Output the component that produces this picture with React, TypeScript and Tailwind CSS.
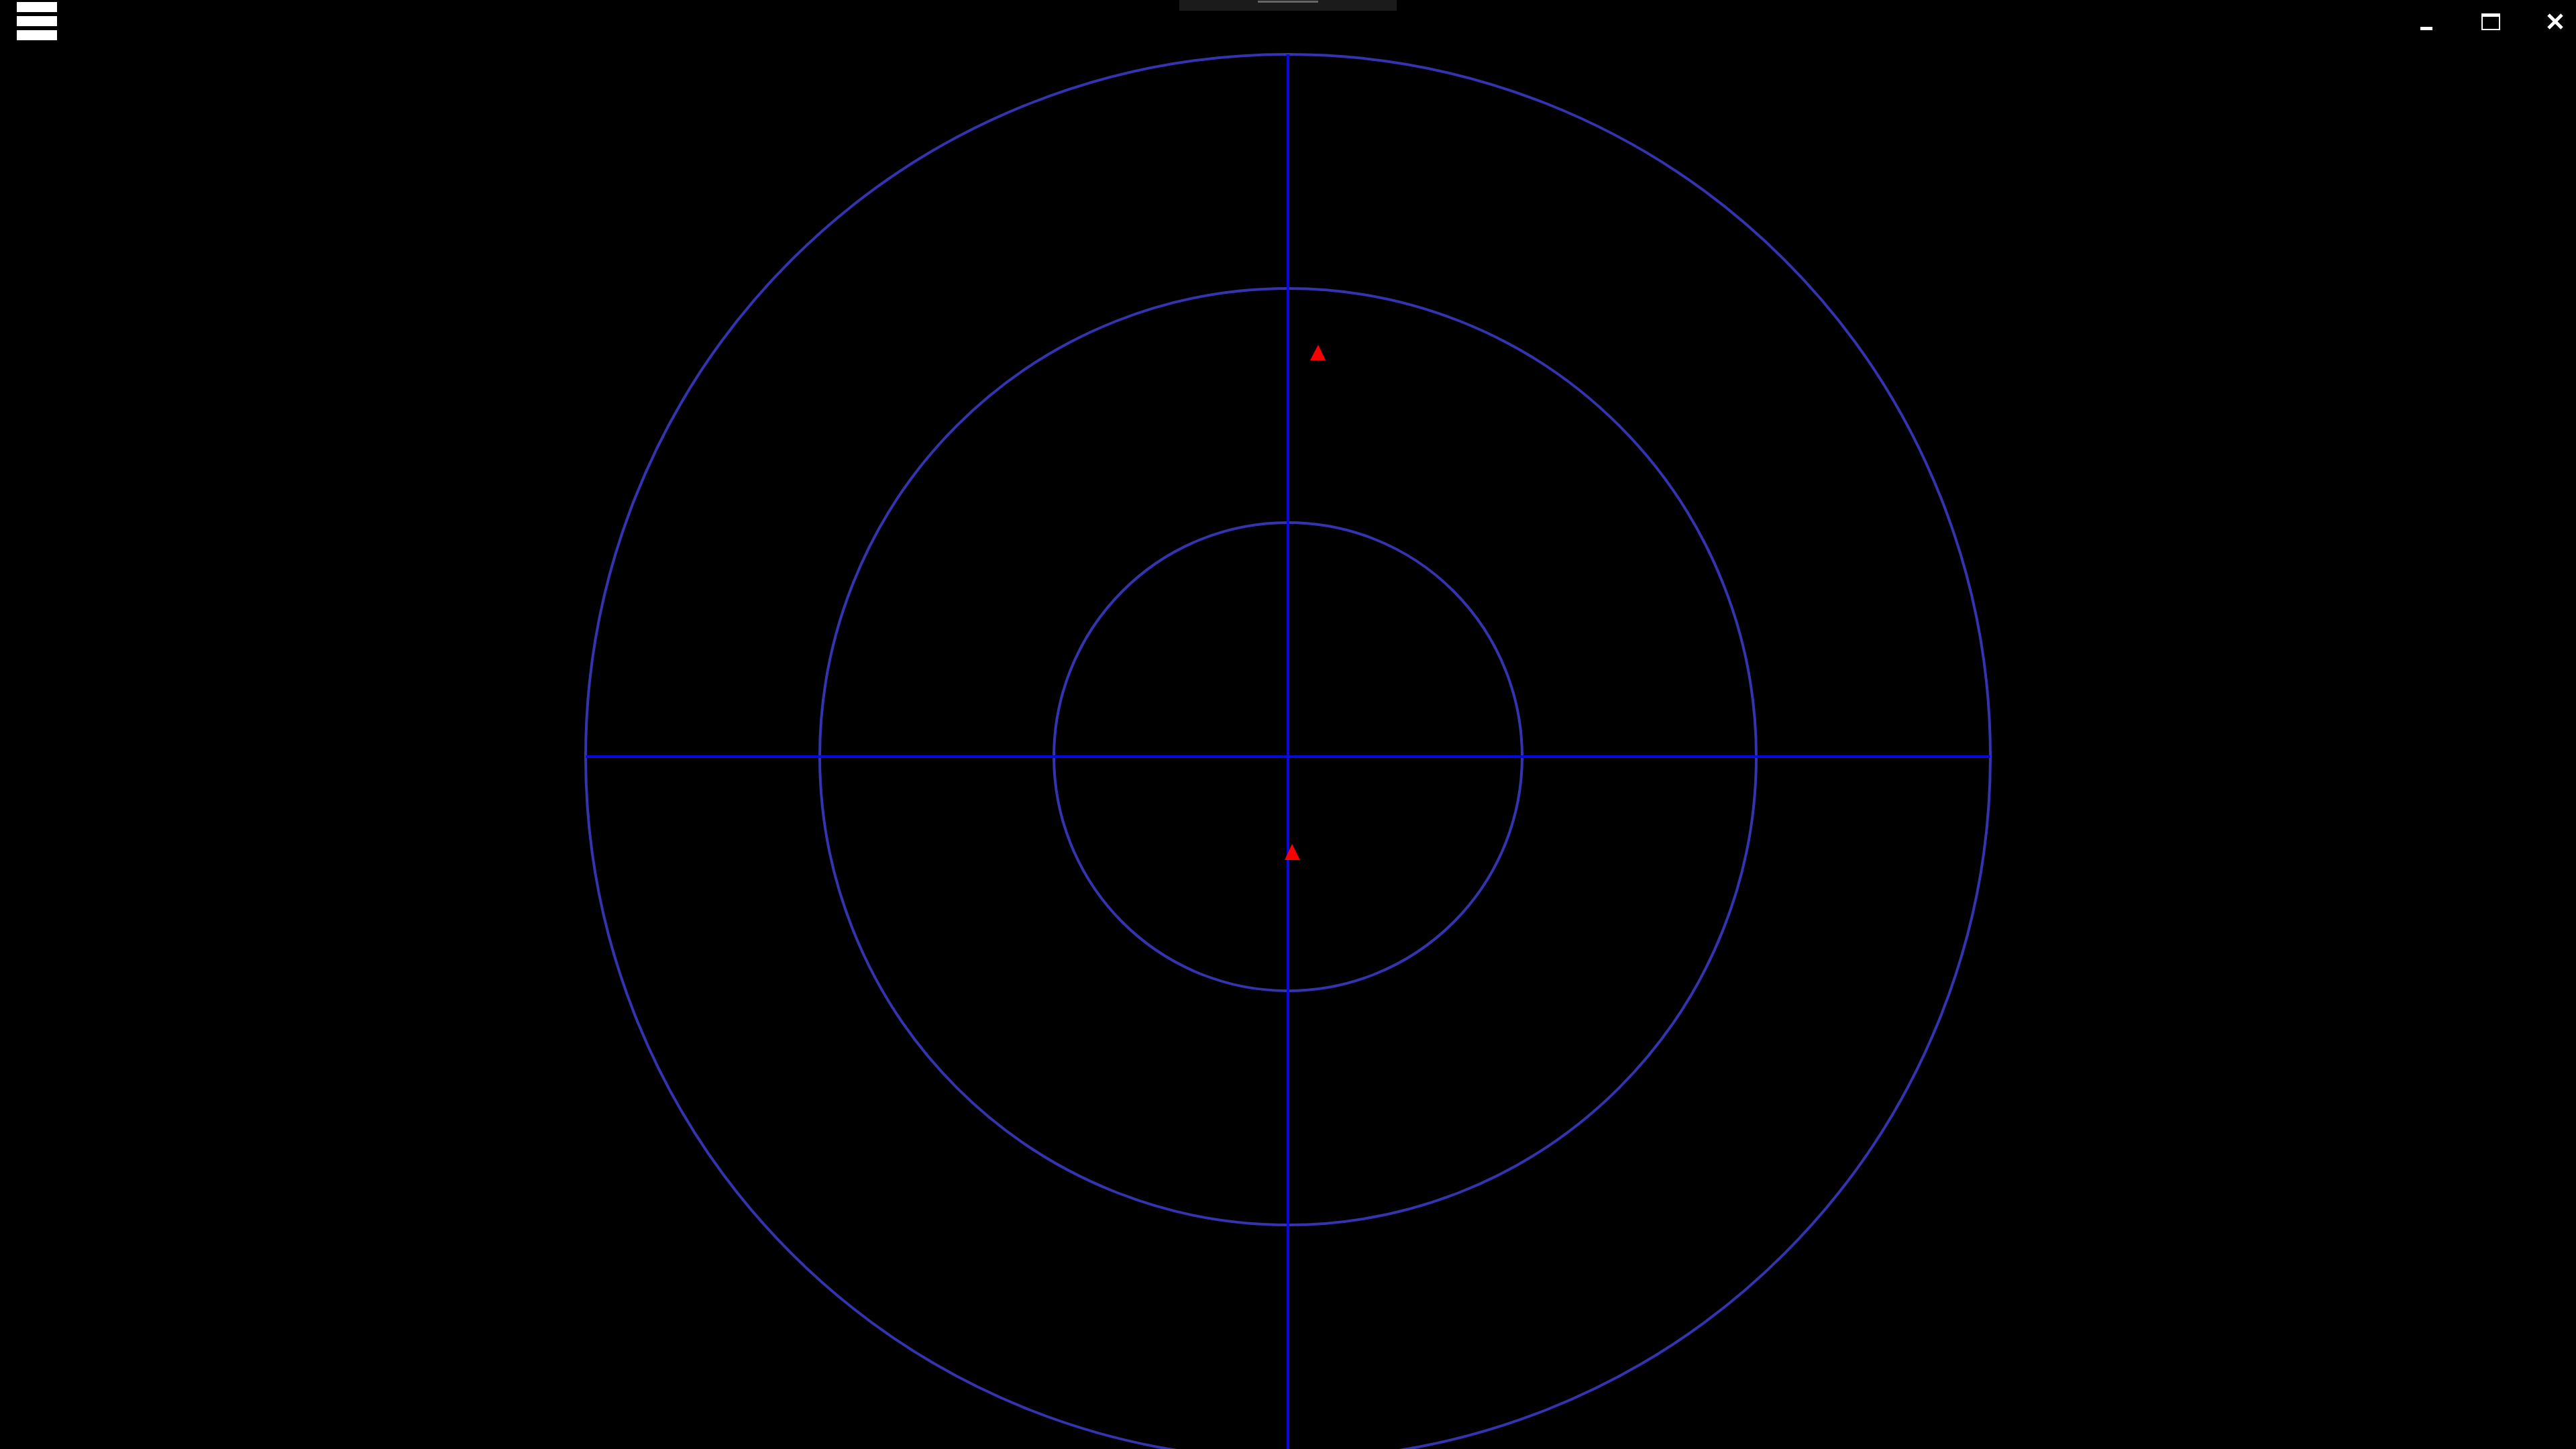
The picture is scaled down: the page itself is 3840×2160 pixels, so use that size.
import React from "react";

const CX = 1920;
const CY = 1128;
const RADII = [349, 698, 1047];

function Radar() {
  return (
    <svg
      className="absolute inset-0"
      width={3840}
      height={2160}
      viewBox="0 0 3840 2160"
    >
      {RADII.map((r) => (
        <circle
          key={r}
          cx={CX}
          cy={CY}
          r={r}
          fill="none"
          stroke="#3434b0"
          strokeWidth={4}
        />
      ))}
      <line
        x1={CX - 1047}
        y1={CY}
        x2={CX + 1047}
        y2={CY}
        stroke="#0808e0"
        strokeWidth={4}
      />
      <line
        x1={CX}
        y1={CY - 1047}
        x2={CX}
        y2={2160}
        stroke="#0808e0"
        strokeWidth={4}
      />
      {/* contacts */}
      <polygon points="1953,537 1976,537 1965,514" fill="#ff0000" />
      <polygon points="1915,1282 1938,1282 1926,1258" fill="#ff0000" />
    </svg>
  );
}

export default function App() {
  return (
    <div className="relative w-[3840px] h-[2160px] bg-black overflow-hidden">
      <Radar />

      {/* Top bar */}
      <div className="absolute top-0 left-0 right-0 grid grid-cols-3 items-start">
        <div className="flex justify-start">
          <button className="ml-[25px] mt-[3px] flex flex-col gap-[6px]">
            <span className="block w-[60px] h-[15px] bg-white" />
            <span className="block w-[60px] h-[15px] bg-white" />
            <span className="block w-[60px] h-[15px] bg-white" />
          </button>
        </div>

        <div className="flex justify-center">
          <div className="w-[324px] h-[16px] bg-[#1b1b1b] flex justify-center pt-[1px]">
            <span className="block w-[90px] h-[3px] bg-[#666666]" />
          </div>
        </div>

        <div className="flex justify-end items-start mr-[19px]">
          <button className="mt-[40px] w-[18px] h-[5px] bg-white" />
          <button className="ml-[73px] mt-[20px] w-[28px] h-[25px] border-white border-t-[5px] border-x-[2px] border-b-[2px]" />
          <button className="ml-[70px] mt-[20px] w-[24px] h-[24px]">
            <svg width={24} height={24} viewBox="0 0 24 24">
              <line x1={2} y1={2} x2={22} y2={22} stroke="white" strokeWidth={5} />
              <line x1={22} y1={2} x2={2} y2={22} stroke="white" strokeWidth={5} />
            </svg>
          </button>
        </div>
      </div>
    </div>
  );
}
